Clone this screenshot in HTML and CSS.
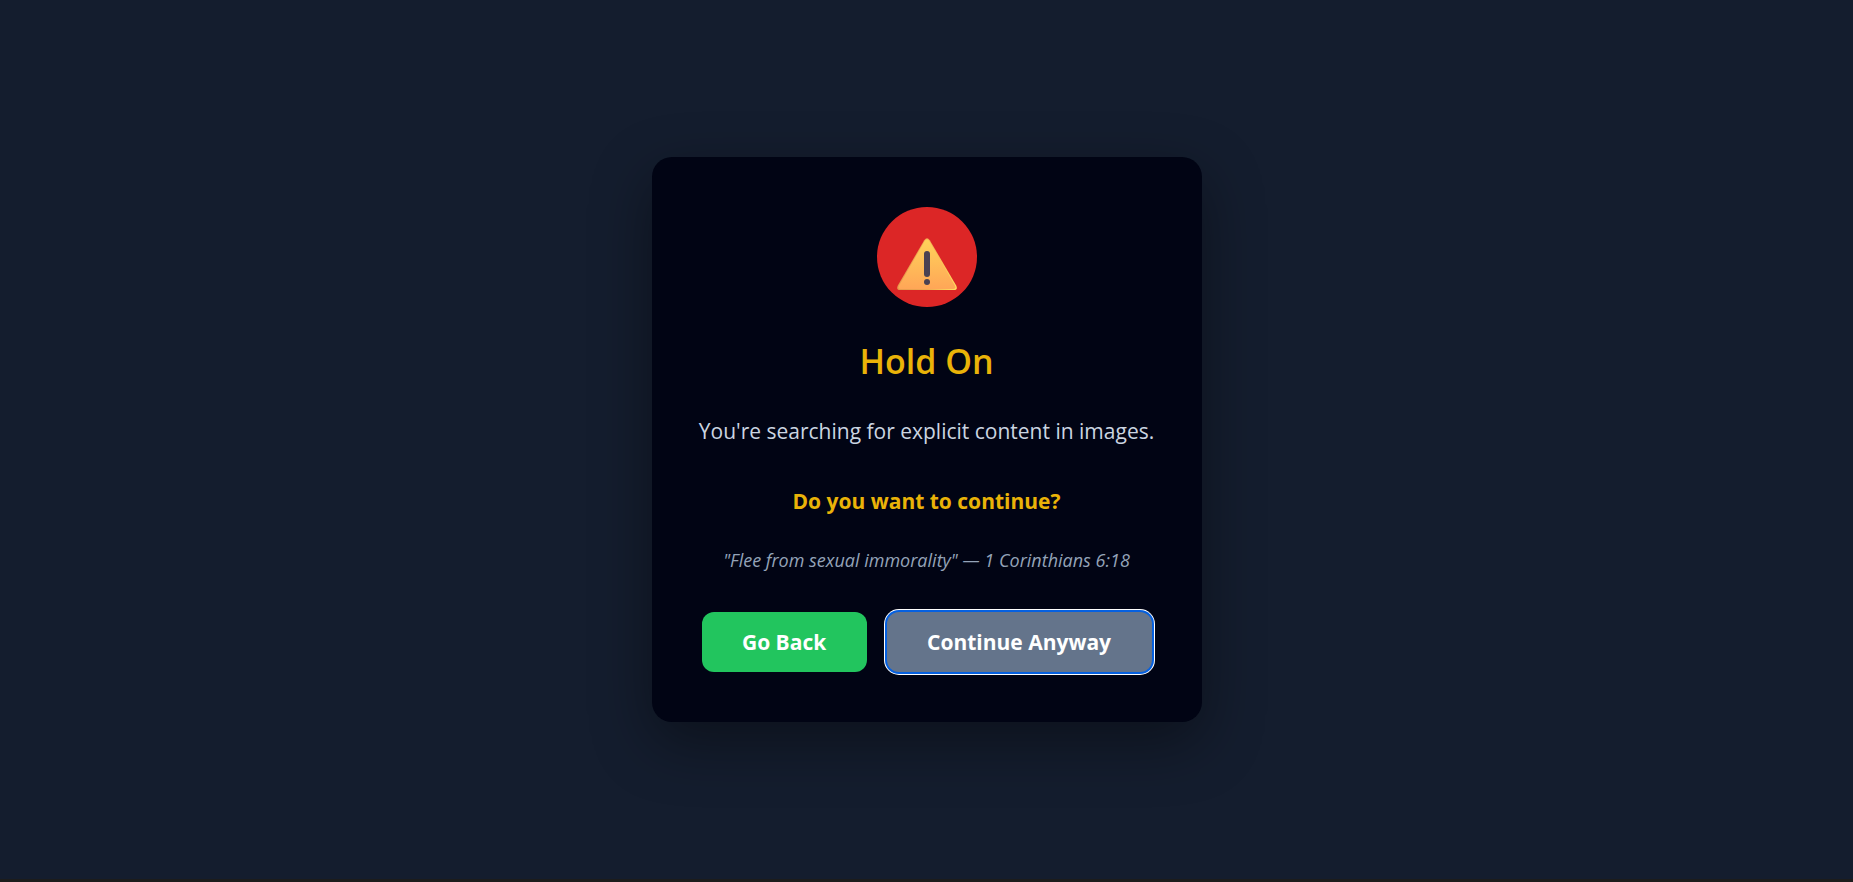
FILE: index.html
```html
<!DOCTYPE html>
<html lang="en">
<head>
  <meta charset="UTF-8" />
  <meta name="viewport" content="width=device-width, initial-scale=1" />
  <title>Hold On</title>
  <link rel="stylesheet" href="styles.css">
</head>
<body>
  <main class="card">
    <div class="icon">
      <svg class="warning" viewBox="0 0 60 54" aria-hidden="true">
        <defs>
          <linearGradient id="fill" x1="0" y1="0" x2="0" y2="1">
            <stop offset="0" stop-color="#ffd35a" />
            <stop offset="1" stop-color="#ffa657" />
          </linearGradient>
          <linearGradient id="edge" x1="0" y1="0" x2="1" y2="0">
            <stop offset="0" stop-color="#e79a4c" />
            <stop offset="0.5" stop-color="#f0a850" />
            <stop offset="1" stop-color="#ffe35f" />
          </linearGradient>
        </defs>
        <path d="M27.2 3.2Q30-.8 32.8 3.2L59.3 48.8Q61 53 57 53H3Q-1 53 .7 48.8Z" fill="url(#edge)" />
        <path d="M27.8 3.8Q30 .6 32.2 3.8L58 48.8Q59.4 52 56.5 52H3.5Q.6 52 2 48.8Z" fill="url(#fill)" />
        <rect x="27" y="14" width="6" height="26" rx="3" fill="#4b4152" />
        <circle cx="30" cy="45" r="3" fill="#4b4152" />
      </svg>
    </div>
    <h1>Hold On</h1>
    <p class="message">You're searching for explicit content in images.</p>
    <p class="question">Do you want to continue?</p>
    <p class="verse">"Flee from sexual immorality" — 1 Corinthians 6:18</p>
    <div class="buttons">
      <button type="button" class="back">Go Back</button>
      <button type="button" class="continue">Continue Anyway</button>
    </div>
  </main>
</body>
</html>
```
FILE: styles.css
```css
* {
  box-sizing: border-box;
}
body {
  margin: 0;
  min-height: 100vh;
  display: flex;
  justify-content: center;
  align-items: center;
  background: #141d2e;
  border-bottom: 3px solid #1c1c1c;
  font-family: "Segoe UI", "Open Sans", "Noto Sans", sans-serif;
  text-align: center;
}
.card {
  width: 550px;
  max-width: 100%;
  padding: 50px 40px;
  background: #010414;
  border-radius: 20px;
  box-shadow: 0 20px 60px rgba(0, 0, 0, 0.4);
}
.icon {
  display: flex;
  justify-content: center;
  align-items: flex-end;
  width: 100px;
  height: 100px;
  margin: 0 auto 30px;
  padding-bottom: 16px;
  background: #dc2626;
  border-radius: 50%;
}
.warning {
  width: 60px;
  height: 54px;
}
h1 {
  margin: 0 0 28px;
  font-size: 34px;
  font-weight: 600;
  line-height: 48px;
  color: #eab308;
}
.message,
.question {
  margin: 0 0 34px;
  font-size: 21px;
  line-height: 36px;
}
.message {
  color: #cbd5e1;
}
.question {
  margin-bottom: 27px;
  font-weight: 700;
  color: #eab308;
}
.verse {
  margin: 0 0 38px;
  font-size: 18px;
  font-style: italic;
  line-height: 28px;
  color: #94a3b8;
}
.buttons {
  display: flex;
  justify-content: center;
  gap: 20px;
  padding: 0 10px;
}
button {
  flex: 1 1 auto;
  height: 60px;
  padding: 0 38px;
  border: none;
  border-radius: 12px;
  font-family: inherit;
  font-size: 21px;
  font-weight: 700;
  color: #fff;
  cursor: pointer;
}
.back {
  background: #22c55e;
}
.continue {
  background: #64748b;
  box-shadow: 0 0 0 2px #0560e0, 0 0 0 3px #fff;
}
```
